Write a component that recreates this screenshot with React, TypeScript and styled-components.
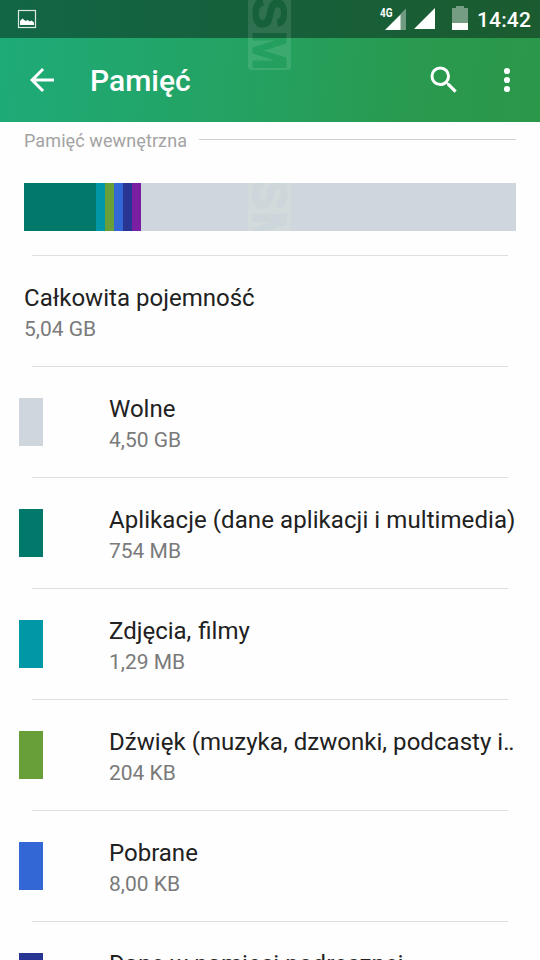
import React from "react";
import styled, { createGlobalStyle } from "styled-components";

const GlobalStyle = createGlobalStyle`
  * { box-sizing: border-box; }
  html, body { margin: 0; height: 960px; overflow: hidden; background: #fefefe; }
  body { font-family: Roboto, "Noto Sans", sans-serif; }
`;

const Screen = styled.div`
  position: relative;
  width: 540px;
  height: 960px;
  overflow: hidden;
  background: #fefefe;
`;

const Header = styled.header`
  position: relative;
  height: 122px;
  background: linear-gradient(96deg, #1eab78 0%, #24a262 45%, #299a50 75%, #2b9749 100%);
`;

const StatusBar = styled.div`
  display: flex;
  align-items: flex-start;
  height: 38px;
  padding-right: 9px;
  background: linear-gradient(90deg, #126645 0%, #16603b 50%, #1b5b2f 100%);
`;

const PhotoIcon = styled.svg`
  margin: 9px auto 0 17px;
`;

const SignalIcons = styled.svg`
  width: 92px;
  height: 38px;
`;

const Clock = styled.span`
  width: 54px;
  margin-left: 7px;
  padding-top: 1px;
  color: #fff;
  font-size: 21px;
  font-weight: 500;
  letter-spacing: 0.15px;
  line-height: 38px;
  white-space: nowrap;
`;

const Toolbar = styled.div`
  display: flex;
  align-items: center;
  height: 84px;
  padding: 0 15px 0 24px;
`;

const Title = styled.h1`
  flex: 1;
  margin: 2px 0 0 30px;
  color: #fff;
  font-size: 30px;
  font-weight: 500;
  line-height: 36px;
`;

const ToolIcon = styled.svg<{ $gap?: number }>`
  width: 36px;
  height: 36px;
  margin-left: ${(p) => p.$gap ?? 0}px;
  fill: #fff;
`;

const Section = styled.div`
  display: flex;
  align-items: center;
  height: 37px;
  padding: 0 24px;
  gap: 12px;
`;

const SectionLabel = styled.span`
  color: #a3a3a3;
  font-size: 18px;
  letter-spacing: 0.1px;
  line-height: 24px;
`;

const SectionRule = styled.span`
  flex: 1;
  height: 1px;
  margin-bottom: 3px;
  background: #d0d0d0;
`;

const UsageBar = styled.div`
  position: relative;
  display: flex;
  height: 48px;
  margin: 24px 24px 24px;
  overflow: hidden;
  background: #cfd6dd;
`;

const Segment = styled.span<{ $width: number; $color: string }>`
  width: ${(p) => p.$width}px;
  background: ${(p) => p.$color};
`;

const Divider = styled.div`
  height: 1px;
  margin: 0 32px;
  background: #dfdfdf;
`;

const Row = styled.div`
  display: flex;
  align-items: center;
  height: 110px;
  padding: 0 24px 0 19px;
`;

const Swatch = styled.span<{ $color: string }>`
  flex: none;
  width: 24px;
  height: 48px;
  margin-right: 66px;
  background: ${(p) => p.$color};
`;

const RowText = styled.div<{ $flush?: boolean }>`
  min-width: 0;
  padding-top: 5px;
  padding-left: ${(p) => (p.$flush ? 5 : 0)}px;
`;

const Name = styled.div<{ $tracking?: number }>`
  color: #212121;
  font-size: 24px;
  letter-spacing: ${(p) => p.$tracking ?? 0}px;
  word-spacing: ${(p) => (p.$tracking ? 0 : 1)}px;
  line-height: 32px;
  white-space: nowrap;
`;

const Dots = styled.span`
  letter-spacing: -1.2px;
`;

const Amount = styled.div`
  color: #7a7a7a;
  font-size: 21px;
  line-height: 31px;
`;

const Stamp = styled.svg<{ $x: number; $y: number }>`
  position: absolute;
  left: ${(p) => p.$x}px;
  top: ${(p) => p.$y}px;
  width: 43px;
  height: 74px;
`;

const segments = [
  { width: 72, color: "#00796b" },
  { width: 9, color: "#0097a7" },
  { width: 9, color: "#689f38" },
  { width: 9, color: "#3367d6" },
  { width: 9, color: "#283593" },
  { width: 9, color: "#7b1fa2" },
];

interface StorageRow {
  name: string;
  amount: string;
  color: string;
  tracking?: number;
  clipped?: boolean;
}

const rows: StorageRow[] = [
  { name: "Wolne", amount: "4,50 GB", color: "#cfd6dd" },
  { name: "Aplikacje (dane aplikacji i multimedia)", amount: "754 MB", color: "#00796b", tracking: 0.08 },
  { name: "Zdjęcia, filmy", amount: "1,29 MB", color: "#0097a7" },
  { name: "Dźwięk (muzyka, dzwonki, podcasty i", amount: "204 KB", color: "#689f38", tracking: 0.04, clipped: true },
  { name: "Pobrane", amount: "8,00 KB", color: "#3367d6" },
  { name: "Dane w pamięci podręcznej", amount: "", color: "#283593", tracking: 0.07 },
];

interface SmStampProps {
  x: number;
  y: number;
  box: string;
  ink: string;
}

function SmStamp({ x, y, box, ink }: SmStampProps) {
  const id = `stamp-${x}`;
  const letters = (fill: string) => (
    <g
      fill={fill}
      stroke={fill}
      strokeWidth="1.2"
      strokeLinejoin="round"
      fontFamily="Liberation Sans, sans-serif"
      fontWeight="700"
      fontSize="48"
    >
      <text transform="translate(5 -3) rotate(90)" textLength="32" lengthAdjust="spacingAndGlyphs">S</text>
      <text transform="translate(5 30.5) rotate(90)" textLength="40" lengthAdjust="spacingAndGlyphs">M</text>
    </g>
  );
  return (
    <Stamp $x={x} $y={y} viewBox="0 0 43 74">
      <mask id={id} maskUnits="userSpaceOnUse" x="0" y="-10" width="43" height="90">
        <rect y="-10" width="43" height="80" rx="3" fill="#fff" />
        {letters("#000")}
      </mask>
      <rect y="-10" width="43" height="80" rx="3" fill={box} mask={`url(#${id})`} />
      {letters(ink)}
    </Stamp>
  );
}

export default function App() {
  return (
    <Screen>
      <GlobalStyle />
      <Header>
        <StatusBar>
          <PhotoIcon width="20" height="20" viewBox="0 0 20 20">
            <rect x="1.5" y="1.5" width="17" height="17" fill="none" stroke="#dce9e3" strokeWidth="1.2" />
            <path d="M3 16v-4l2.5-2.5L8.5 12l2.5-1 1.5 1.5 2-1 2.5 2v2.500z" fill="#fff" />
          </PhotoIcon>
          <SignalIcons viewBox="378 0 92 38">
            <text x="380" y="16.5" fill="#fff" fontFamily="Roboto, sans-serif" fontSize="12" fontWeight="700" textLength="12.5" lengthAdjust="spacingAndGlyphs">4G</text>
            <path d="M400 14.5 406 8.5V30h-6z" fill="#fff" fillOpacity=".38" />
            <path d="M385 30 400.5 14.5V30z" fill="#fff" />
            <path d="M414 29 435 8v21z" fill="#fff" />
            <path d="M452 8h4V6h8v2h4v15h-16z" fill="#fff" fillOpacity=".4" />
            <path d="M452 23h16v7h-16z" fill="#fff" />
          </SignalIcons>
          <Clock>14:42</Clock>
        </StatusBar>
        <Toolbar>
          <ToolIcon viewBox="0 0 24 24">
            <path d="M20 11H7.83l5.59-5.59L12 4l-8 8 8 8 1.41-1.41L7.83 13H20v-2z" />
          </ToolIcon>
          <Title>Pamięć</Title>
          <ToolIcon viewBox="0 0 24 24">
            <path d="M15.5 14h-.79l-.28-.27A6.47 6.47 0 0 0 16 9.5 6.5 6.5 0 1 0 9.5 16c1.61 0 3.09-.59 4.23-1.57l.27.28v.79l5 4.99L20.49 19l-4.99-5zm-6 0C7.01 14 5 11.99 5 9.5S7.01 5 9.5 5 14 7.01 14 9.5 11.99 14 9.5 14z" />
          </ToolIcon>
          <ToolIcon viewBox="0 0 24 24" $gap={27}>
            <circle cx="12" cy="6" r="2.05" />
            <circle cx="12" cy="12" r="2.05" />
            <circle cx="12" cy="18" r="2.05" />
          </ToolIcon>
        </Toolbar>
        <SmStamp x={248} y={0} box="rgba(255,255,255,.11)" ink="rgba(30,140,80,.03)" />
      </Header>
      <Section>
        <SectionLabel>Pamięć wewnętrzna</SectionLabel>
        <SectionRule />
      </Section>
      <UsageBar>
        {segments.map((s) => (
          <Segment key={s.color} $width={s.width} $color={s.color} />
        ))}
        <SmStamp x={224} y={-2} box="#d2dadc" ink="#cdd6da" />
      </UsageBar>
      <Divider />
      <Row>
        <RowText $flush>
          <Name $tracking={0.02}>Całkowita pojemność</Name>
          <Amount>5,04 GB</Amount>
        </RowText>
      </Row>
      {rows.map((row) => (
        <React.Fragment key={row.name}>
          <Divider />
          <Row>
            <Swatch $color={row.color} />
            <RowText>
              <Name $tracking={row.tracking}>
                {row.name}
                {row.clipped && <Dots>..</Dots>}
              </Name>
              <Amount>{row.amount || "\u00a0"}</Amount>
            </RowText>
          </Row>
        </React.Fragment>
      ))}
    </Screen>
  );
}
